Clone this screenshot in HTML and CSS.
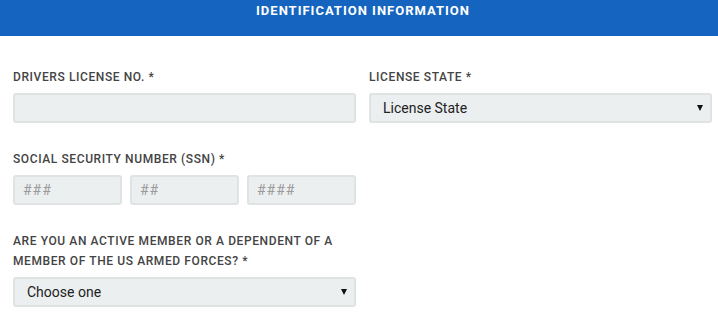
FILE: index.html
```html
<!DOCTYPE html>
<html>
<head>
<meta charset="utf-8">
<link rel="stylesheet" href="styles.css">
</head>
<body>
<div class="header">IDENTIFICATION INFORMATION</div>
<form class="form">
  <div class="row">
    <div class="field">
      <label class="label">DRIVERS LICENSE NO. *</label>
      <input class="input" type="text">
    </div>
    <div class="field">
      <label class="label">LICENSE STATE *</label>
      <div class="select-wrap">
        <select class="select"><option>License State</option></select>
      </div>
    </div>
  </div>
  <div class="row">
    <div class="field">
      <label class="label">SOCIAL SECURITY NUMBER (SSN) *</label>
      <div class="ssn">
        <input class="input" type="text" placeholder="###">
        <input class="input" type="text" placeholder="##">
        <input class="input" type="text" placeholder="####">
      </div>
    </div>
    <div class="field"></div>
  </div>
  <div class="row">
    <div class="field">
      <label class="label">ARE YOU AN ACTIVE MEMBER OR A DEPENDENT OF A MEMBER OF THE US ARMED FORCES? *</label>
      <div class="select-wrap">
        <select class="select"><option>Choose one</option></select>
      </div>
    </div>
    <div class="field"></div>
  </div>
</form>
</body>
</html>
```

FILE: styles.css
```css
* { box-sizing: border-box; }
html, body { margin: 0; padding: 0; background: #fff; }
body { font-family: Roboto, "Liberation Sans", sans-serif; }

.header {
  height: 36px;
  background: #1565c0;
  color: #fff;
  font-weight: 700;
  font-size: 13px;
  letter-spacing: 1px;
  line-height: 18px;
  padding-top: 2px;
  padding-left: 8px;
  text-align: center;
}

.form {
  padding: 31px 6px 0 13px;
  display: flex;
  flex-direction: column;
  gap: 26px;
}

.row {
  display: grid;
  grid-template-columns: 1fr 1fr;
  column-gap: 13px;
}

.field {
  display: flex;
  flex-direction: column;
  gap: 6px;
}

.label {
  display: block;
  font-size: 12px;
  font-weight: 500;
  line-height: 20px;
  letter-spacing: 0.6px;
  color: #444;
}

.input, .select {
  width: 100%;
  height: 30px;
  margin: 0;
  background: #eceff0;
  border: 2px solid #dfe3e4;
  border-radius: 3px;
  font-family: Roboto, "Liberation Sans", sans-serif;
  font-size: 14px;
  color: #222;
  outline: none;
}

.input { padding: 0 8px; }
.input::placeholder { color: #9a9a9a; letter-spacing: 1px; }

.ssn {
  display: grid;
  grid-template-columns: 1fr 1fr 1fr;
  column-gap: 8px;
}

.select-wrap { position: relative; }
.select {
  appearance: none;
  -webkit-appearance: none;
  padding: 0 12px;
}
.select-wrap::after {
  content: "";
  position: absolute;
  right: 9px;
  top: 12px;
  border-left: 3px solid transparent;
  border-right: 3px solid transparent;
  border-top: 6px solid #111;
  pointer-events: none;
}
```
